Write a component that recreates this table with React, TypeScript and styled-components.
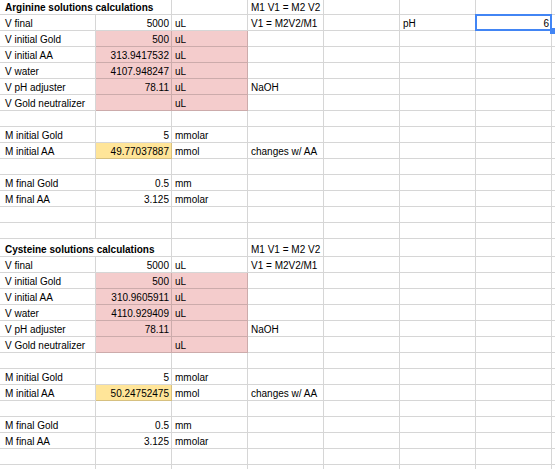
import React from 'react';
import styled, { createGlobalStyle } from 'styled-components';

const GlobalStyle = createGlobalStyle`
  html, body { margin: 0; padding: 0; background: #fff; overflow: hidden; }
  body { font-family: "Liberation Sans", Arial, sans-serif; }
`;

type Fill = 'pink' | 'yellow';
type CellDef = { t?: string; n?: boolean; f?: Fill; b?: boolean; s?: number; sel?: boolean };
type RowDef = { h: number; cells: CellDef[] };

const fills: Record<Fill, string> = { pink: '#f4cccc', yellow: '#ffe599' };
const gridLine = 'rgba(0, 0, 0, 0.16)';

const Sheet = styled.div`
  width: 555px;
  height: 469px;
  overflow: hidden;
  background: #fff;
  display: flex;
  flex-direction: column;
`;

const Row = styled.div<{ $h: number }>`
  display: grid;
  grid-template-columns: 96px repeat(6, 76px) 1fr;
  height: ${(p) => p.$h}px;
  flex: none;
`;

const Cell = styled.div<{ $right?: boolean; $fill?: Fill; $bold?: boolean; $span: number; $first?: boolean; $sel?: boolean }>`
  position: ${(p) => (p.$sel ? 'relative' : 'static')};
  box-sizing: border-box;
  grid-column: span ${(p) => p.$span};
  border-right: 1px solid ${gridLine};
  border-bottom: 1px solid ${gridLine};
  background: ${(p) => (p.$fill ? fills[p.$fill] : '#fff')};
  display: flex;
  align-items: flex-end;
  justify-content: ${(p) => (p.$right ? 'flex-end' : 'flex-start')};
  padding: 0 2px 0 ${(p) => (p.$first ? 5 : 3)}px;
  font-size: 10px;
  line-height: 12px;
  font-weight: ${(p) => (p.$bold ? 700 : 400)};
  color: #000;
  white-space: nowrap;
  min-width: 0;
`;

const Selection = styled.div`
  position: absolute;
  top: -1px;
  left: -1px;
  right: -1px;
  bottom: -1px;
  border: 2px solid #4285f4;
  z-index: 2;
  pointer-events: none;
`;

const Handle = styled.div`
  position: absolute;
  right: -5px;
  bottom: -4px;
  width: 6px;
  height: 6px;
  background: #4285f4;
  z-index: 3;
`;

const E: CellDef = {};
const blank = (h = 16): RowDef => ({ h, cells: [E, E, E, E, E, E, E, E] });
const line = (label: string, value: CellDef, unit: CellDef, note = '', rest: CellDef[] = [E, E, E, E]): RowDef => ({
  h: 16,
  cells: [{ t: label }, { ...value, n: true }, unit, { t: note }, ...rest],
});

const section = (title: string, titleH: number, data: {
  initAA: string; water: string; pHUnit: boolean; mAA: string; withPH: boolean;
}): RowDef[] => [
  { h: titleH, cells: [{ t: title, b: true, s: 2 }, E, { t: 'M1 V1 = M2 V2' }, E, E, E, E] },
  line('V final', { t: '5000' }, { t: 'uL' }, 'V1 = M2V2/M1',
    data.withPH ? [E, { t: 'pH' }, { t: '6', n: true, sel: true }, E] : [E, E, E, E]),
  line('V initial Gold', { t: '500', f: 'pink' }, { t: 'uL', f: 'pink' }),
  line('V initial AA', { t: data.initAA, f: 'pink' }, { t: 'uL', f: 'pink' }),
  line('V water', { t: data.water, f: 'pink' }, { t: 'uL', f: 'pink' }),
  line('V pH adjuster', { t: '78.11', f: 'pink' }, { t: data.pHUnit ? 'uL' : '', f: 'pink' }, 'NaOH'),
  line('V Gold neutralizer', { f: 'pink' }, { t: 'uL', f: 'pink' }),
  blank(),
  line('M initial Gold', { t: '5' }, { t: 'mmolar' }),
  line('M initial AA', { t: data.mAA, f: 'yellow' }, { t: 'mmol' }, 'changes w/ AA'),
  blank(),
  line('M final Gold', { t: '0.5' }, { t: 'mm' }),
  line('M final AA', { t: '3.125' }, { t: 'mmolar' }),
];

const rows: RowDef[] = [
  ...section('Arginine solutions calculations', 15, {
    initAA: '313.9417532', water: '4107.948247', pHUnit: true, mAA: '49.77037887', withPH: true,
  }),
  blank(),
  blank(),
  ...section('Cysteine solutions calculations', 18, {
    initAA: '310.9605911', water: '4110.929409', pHUnit: false, mAA: '50.24752475', withPH: false,
  }),
  blank(),
  blank(),
];

export default function App() {
  return (
    <>
      <GlobalStyle />
      <Sheet>
        {rows.map((row, ri) => (
          <Row key={ri} $h={row.h}>
            {row.cells.map((c, ci) => (
              <Cell
                key={ci}
                $right={c.n}
                $fill={c.f}
                $bold={c.b}
                $span={c.s ?? 1}
                $first={ci === 0}
                $sel={c.sel}
              >
                {c.t}
                {c.sel && (
                  <>
                    <Selection />
                    <Handle />
                  </>
                )}
              </Cell>
            ))}
          </Row>
        ))}
      </Sheet>
    </>
  );
}
